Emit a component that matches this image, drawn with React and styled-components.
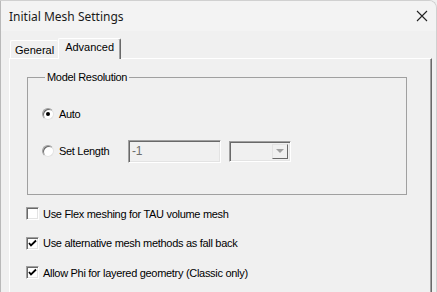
import React from "react";
import styled, { createGlobalStyle } from "styled-components";

const GlobalStyle = createGlobalStyle`
  html, body {
    margin: 0;
    padding: 0;
    background: #f0f0f0;
  }
`;

const Window = styled.div`
  width: 437px;
  height: 292px;
  box-sizing: border-box;
  border-left: 1px solid #b9b9b9;
  border-top: 1px solid #d0d0d0;
  border-right: 1px solid #d0d0d0;
  border-top-right-radius: 8px;
  background: #f0f0f0;
  overflow: hidden;
  font-family: "Liberation Sans", Arial, sans-serif;
  font-size: 11px;
  letter-spacing: -0.3px;
  color: #000;
`;

const TitleBar = styled.div`
  height: 30px;
  display: flex;
  align-items: center;
  justify-content: space-between;
  padding: 0 8px 0 8px;
  background: #f3f3f3;
  letter-spacing: 0;
`;

const Title = styled.span`
  font-family: "Noto Sans", "Open Sans", sans-serif;
  font-size: 12px;
  color: #1a1a1a;
`;

const CloseIcon = () => (
  <svg width="12" height="12" viewBox="0 0 12 12">
    <path d="M1 1 L11 11 M11 1 L1 11" stroke="#222" strokeWidth="1.1" fill="none" />
  </svg>
);

const Body = styled.div`
  padding-top: 7px;
`;

const TabRow = styled.div`
  display: flex;
  align-items: flex-end;
  margin-left: 9px;
  height: 20px;
  position: relative;
  z-index: 1;
  letter-spacing: 0;
`;

const Tab = styled.div`
  box-sizing: border-box;
  height: ${(p) => (p.$active ? "21px" : "18px")};
  margin-bottom: ${(p) => (p.$active ? "-1px" : "0")};
  padding: ${(p) => (p.$active ? "2px 6px 0 6px" : "3px 4px 0 4px")};
  background: #f0f0f0;
  border-top: 1px solid #fff;
  border-left: 1px solid #fff;
  border-right: ${(p) => (p.$active ? "1px solid #696969" : "none")};
  box-shadow: ${(p) => (p.$active ? "inset -1px 0 #a0a0a0" : "none")};
  border-top-left-radius: 2px;
  border-top-right-radius: 2px;
  white-space: nowrap;
`;

const Panel = styled.div`
  margin-left: 8px;
  width: 423px;
  height: 240px;
  box-sizing: border-box;
  border-top: 1px solid #fff;
  border-left: 1px solid #fff;
  border-right: 1px solid #696969;
  box-shadow: inset -1px 0 #a0a0a0;
  padding: 12px 0 0 17px;
`;

const Group = styled.fieldset`
  margin: 0;
  width: 380px;
  height: 124px;
  box-sizing: border-box;
  border: 1px solid #a0a0a0;
  padding: 0 0 0 14px;
`;

const Legend = styled.legend`
  padding: 0 2px;
  margin-left: 3px;
  line-height: 13px;
`;

const OptionRow = styled.div`
  display: flex;
  align-items: center;
  height: 22px;
  margin-top: ${(p) => p.$top}px;
`;

const RadioCircle = styled.span`
  width: 12px;
  height: 12px;
  box-sizing: border-box;
  border-radius: 50%;
  background: #fff;
  border: 1px solid;
  border-color: #a0a0a0 #e3e3e3 #e3e3e3 #a0a0a0;
  box-shadow: inset 1px 1px 0 #696969;
  display: flex;
  align-items: center;
  justify-content: center;
  margin-right: 5px;
  &::after {
    content: "";
    width: 4px;
    height: 4px;
    border-radius: 50%;
    background: ${(p) => (p.$checked ? "#000" : "transparent")};
  }
`;

const RadioLabel = styled.span`
  width: 69px;
`;

const TextBox = styled.div`
  width: 93px;
  height: 23px;
  box-sizing: border-box;
  border: 1px solid;
  border-color: #a0a0a0 #fff #fff #a0a0a0;
  box-shadow: inset 1px 1px 0 #696969, inset -1px -1px 0 #e3e3e3;
  padding: 3px 0 0 3px;
  color: #6d6d6d;
  font-size: 12px;
`;

const Combo = styled.div`
  width: 62px;
  height: 21px;
  box-sizing: border-box;
  margin-left: 8px;
  border: 1px solid;
  border-color: #a0a0a0 #fff #fff #a0a0a0;
  box-shadow: inset 1px 1px 0 #696969, inset -1px -1px 0 #e3e3e3;
  display: flex;
  justify-content: flex-end;
  padding: 2px;
`;

const ComboButton = styled.div`
  width: 16px;
  height: 15px;
  box-sizing: border-box;
  background: #f0f0f0;
  border: 1px solid;
  border-color: #e3e3e3 #696969 #696969 #e3e3e3;
  display: flex;
  align-items: center;
  justify-content: center;
  &::after {
    content: "";
    border-left: 4px solid transparent;
    border-right: 4px solid transparent;
    border-top: 4px solid #a0a0a0;
  }
`;

const CheckList = styled.div`
  display: flex;
  flex-direction: column;
  margin-top: 4px;
  margin-left: -1px;
`;

const CheckRow = styled.div`
  display: flex;
  align-items: center;
  height: 29.5px;
`;

const Box = styled.span`
  width: 13px;
  height: 13px;
  box-sizing: border-box;
  background: #fff;
  border: 1px solid;
  border-color: #a0a0a0 #fff #fff #a0a0a0;
  box-shadow: inset 1px 1px 0 #696969, inset -1px -1px 0 #e3e3e3;
  margin-right: 4px;
  display: flex;
  align-items: center;
  justify-content: center;
`;

const Check = () => (
  <svg width="9" height="9" viewBox="0 0 9 9">
    <path d="M1 4 L3 6.5 L8 1.5" stroke="#000" strokeWidth="1.8" fill="none" />
  </svg>
);

const checks = [
  { label: "Use Flex meshing for TAU volume mesh", on: false },
  { label: "Use alternative mesh methods as fall back", on: true },
  { label: "Allow Phi for layered geometry (Classic only)", on: true },
];

export default function App() {
  return (
    <>
      <GlobalStyle />
      <Window>
        <TitleBar>
          <Title>Initial Mesh Settings</Title>
          <CloseIcon />
        </TitleBar>
        <Body>
          <TabRow>
            <Tab>General</Tab>
            <Tab $active>Advanced</Tab>
          </TabRow>
          <Panel>
            <Group>
              <Legend>Model Resolution</Legend>
              <OptionRow $top={19}>
                <RadioCircle $checked />
                <span>Auto</span>
              </OptionRow>
              <OptionRow $top={15}>
                <RadioCircle />
                <RadioLabel>Set Length</RadioLabel>
                <TextBox>-1</TextBox>
                <Combo>
                  <ComboButton />
                </Combo>
              </OptionRow>
            </Group>
            <CheckList>
              {checks.map((c) => (
                <CheckRow key={c.label}>
                  <Box>{c.on && <Check />}</Box>
                  <span>{c.label}</span>
                </CheckRow>
              ))}
            </CheckList>
          </Panel>
        </Body>
      </Window>
    </>
  );
}
